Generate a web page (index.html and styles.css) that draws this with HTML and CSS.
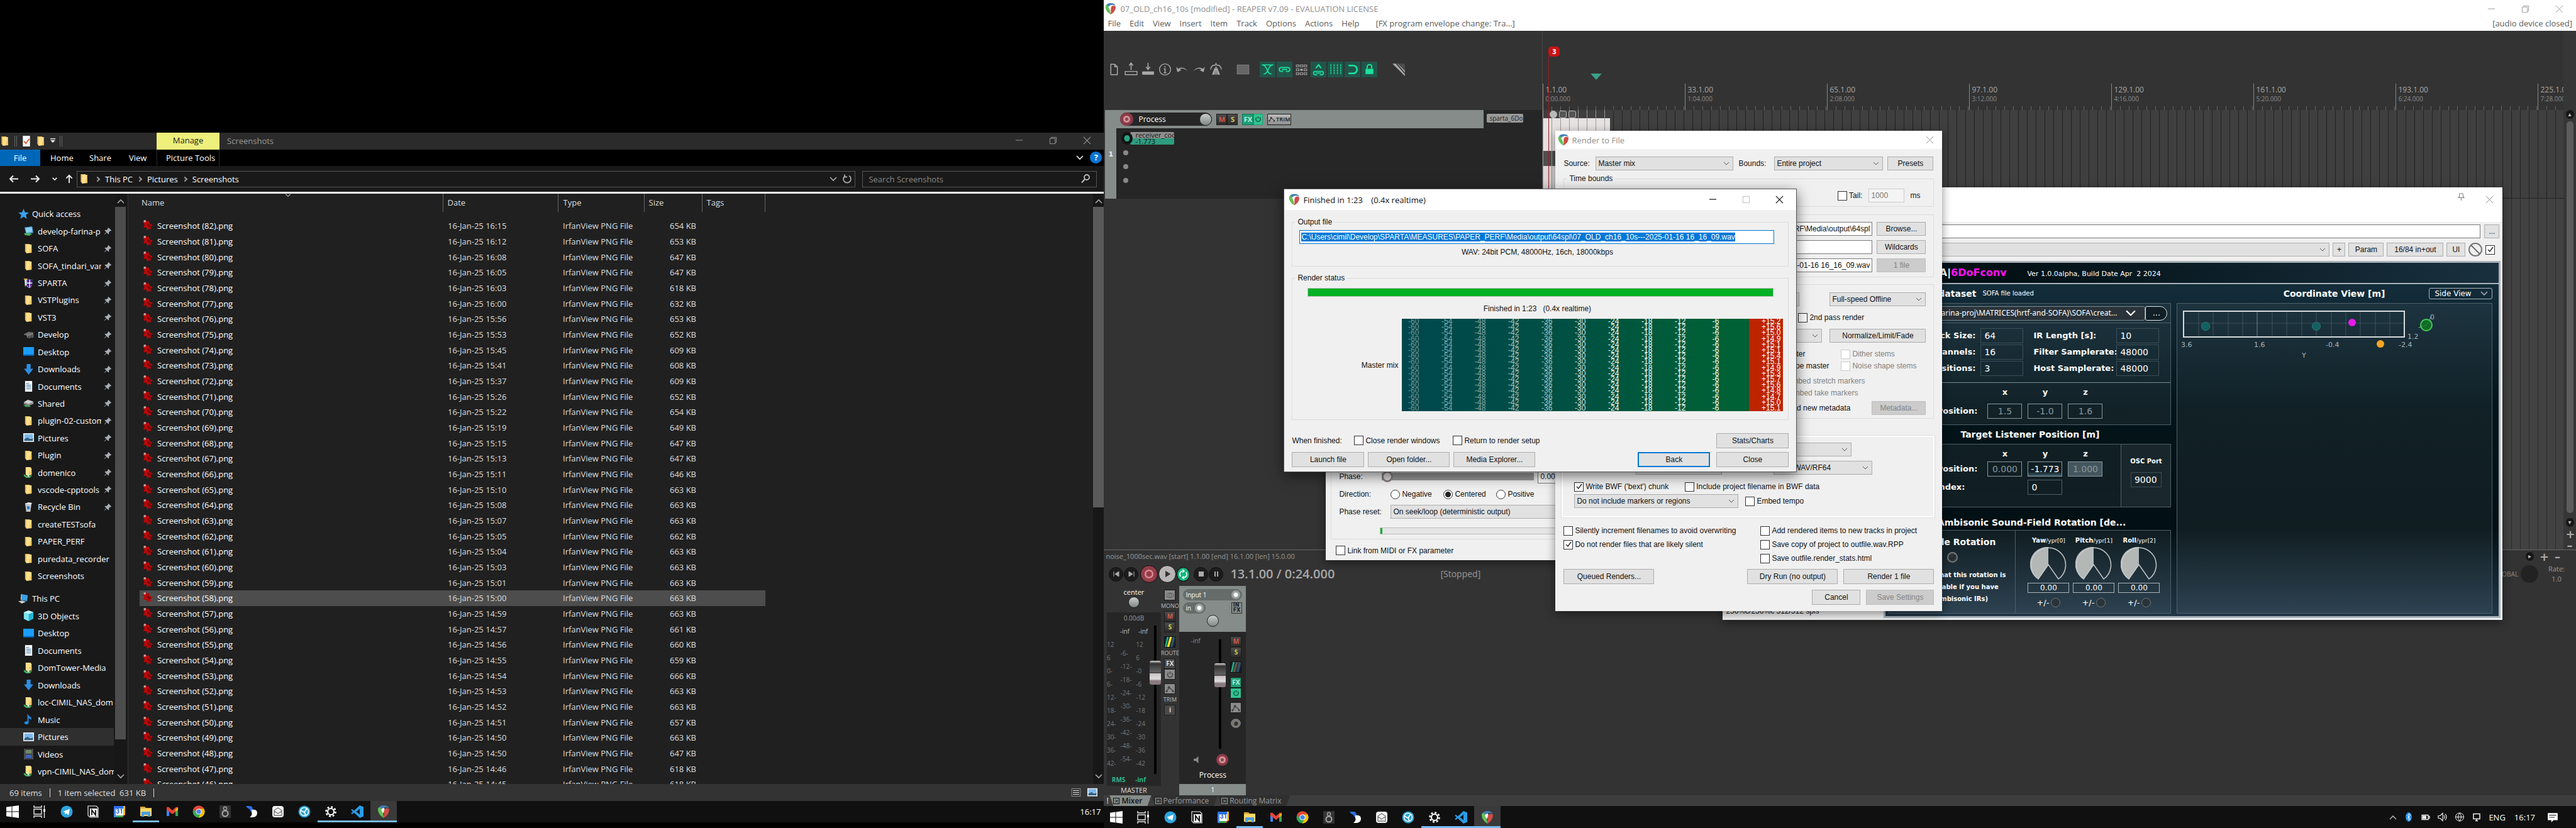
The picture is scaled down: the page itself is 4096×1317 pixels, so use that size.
FILE: index.html
```html
<!DOCTYPE html>
<html lang="en">
<head>
<meta charset="utf-8">
<title>Desktop</title>
<link rel="stylesheet" href="styles.css">
</head>
<body>
<svg class="sprite" aria-hidden="true">
  <symbol id="folder" viewBox="0 0 16 18"><path d="M2 1h8l1 3v12H4l-2-2z" fill="#e8b84d"/><path d="M4 2h9v14l-9 1z" fill="#ffdf8e"/><path d="M10 9h3v7h-3z" fill="#f3c860"/></symbol>
  <symbol id="netfolder" viewBox="0 0 16 18"><path d="M3 0h8l2 2v11l-7 1-3-1z" fill="#ffdf8e"/><path d="M9 7h4v6H9z" fill="#f3c860"/><path d="M0 12l5 3 9-1-4 4H4l-4-3z" fill="#46b35e"/><path d="M6 11h3v5H6z" fill="#cfe8d2"/></symbol>
  <symbol id="pin" viewBox="0 0 14 14"><path d="M8 1l5 5-1 1-1-.3-2.3 2.4.2 2.4-1 1L5 9.500 1.500 13l-.6-.6L4.400 9 1.500 6l1-1 2.400.3L7.300 3 7 2z" fill="#a9aeb4"/></symbol>
  <symbol id="star" viewBox="0 0 16 16"><path d="M8 0l2.200 5.300 5.600.4-4.300 3.700 1.400 5.600L8 12l-4.900 3 1.400-5.600L.2 5.700l5.600-.4z" fill="#3aa0ea"/></symbol>
  <symbol id="netdrive" viewBox="0 0 18 18"><path d="M2 3l13-2 2 11-12 2z" fill="#4aa8dc"/><path d="M4 4l10-1 1 7-10 2z" fill="#8fd0f2"/><path d="M1 13l6-1 8 2-5 3-7-1z" fill="#4cb05f"/></symbol>
  <symbol id="castle" viewBox="0 0 16 18"><path d="M1 1h4l2 2h7v8q-1 5-5 6-4-1-5-5L2 15z" fill="#ddd"/><path d="M5 3h9v8q-1 4-4.500 5.500Q5 15 5 11z" fill="#2a1fa8"/><path d="M9 3h1.500v13H9zM5 8h9v1.500H5z" fill="#fff"/><path d="M6 4l2 2-2 1zM12 5l1 2-2 0zM6 11l2 2-1 1zM12 11l0 2-2 0z" fill="#e02040"/><path d="M0 1h5v2H0z" fill="#cfa92a"/></symbol>
  <symbol id="devdisk" viewBox="0 0 18 14"><path d="M1 6l8-4 8 1v3L9 9 1 7z" fill="#6b6b6b"/><path d="M7 6v6M10 6v7M13 5v7M16 5v7" stroke="#8d8d8d" stroke-width="1.500"/></symbol>
  <symbol id="desktop" viewBox="0 0 16 14"><rect y="0" width="16" height="12" fill="#1a9dff"/><rect y="11" width="16" height="2" fill="#0668c2"/></symbol>
  <symbol id="down" viewBox="0 0 16 16"><path d="M5 0h6v7h4l-7 9-7-9h4z" fill="#2f8ee0"/></symbol>
  <symbol id="doc" viewBox="0 0 16 18"><path d="M2 0h12v18H2z" fill="#f4f8fb"/><path d="M4 4h5M4 7h8M4 10h8M4 13h8" stroke="#4a86b8" stroke-width="1.300"/></symbol>
  <symbol id="drive" viewBox="0 0 18 14"><path d="M1 5l7-4 9 3v4l-8 3-8-3z" fill="#cfcfcf"/><path d="M1 5l8 3 8-4v4l-8 3-8-3z" fill="#8c8c8c"/><path d="M0 10l9 0 4 3H4z" fill="#45a45b"/></symbol>
  <symbol id="picture" viewBox="0 0 16 14"><path d="M0 0h16v13H0z" fill="#f0f4f8"/><path d="M1.500 1.500h13v6h-13z" fill="#7fb9ea"/><path d="M1.500 11.500v-3l5-2 4 2 4-1v4z" fill="#2f6187"/></symbol>
  <symbol id="bin" viewBox="0 0 16 18"><path d="M2 3l11-1-2 15-7 0z" fill="#bcc3c8"/><path d="M2 3l6-2 6 1-3 3z" fill="#e8ecee"/><path d="M5 8l4 0 1 4-4 1z" fill="#1f74c4"/></symbol>
  <symbol id="pc" viewBox="0 0 18 16"><path d="M5 0l11 2-1 10-10-2z" fill="#3d9fe6"/><path d="M5 0l1 0-1 10-1-1z" fill="#d8e2ea"/><path d="M0 12l7-1 6 2-7 3z" fill="#c9ced2"/></symbol>
  <symbol id="cube" viewBox="0 0 16 18"><path d="M8 0l8 3v11l-8 4-8-4V3z" fill="#25b6cf"/><path d="M0 3l8 3v12l-8-4z" fill="#7fe3ee"/><path d="M8 0l8 3-8 3-8-3z" fill="#c3f4f8"/></symbol>
  <symbol id="music" viewBox="0 0 14 18"><path d="M6 0q1 4 5 5 1 2 0 5-1-3-4-3v7q0 3-3.500 3T0 14.500 4 12l1 0V0z" fill="#1d8ee8"/></symbol>
  <symbol id="video" viewBox="0 0 16 18"><path d="M0 0h16v18H0z" fill="#3a3d42"/><path d="M3 2h10v6H3z" fill="#728b63"/><path d="M3 10h10v6H3z" fill="#3d63b8"/><path d="M1.500 1v16M14.500 1v16" stroke="#aaa" stroke-dasharray="1 2"/></symbol>
  <symbol id="irfan" viewBox="0 0 20 20"><path d="M5 1l4 3 2-1 2 5 5 2-4 3 1 4-4-1-2 3-2-5-5 0 2-5-3-4 4 0z" fill="#b80808"/><path d="M9 7l4 3 2 1-3 3-3-3z" fill="#7d0303"/><circle cx="4.500" cy="3.500" r="2" fill="#c9a3a3"/></symbol>

  <symbol id="win" viewBox="0 0 20 20"><path d="M0 2.800L8.500 1.600v8H0zM9.500 1.500L20 0v9.600H9.500zM0 10.500h8.500v8L0 17.300zM9.500 10.500H20V20L9.500 18.500z" fill="#fff"/></symbol>
  <symbol id="taskview" viewBox="0 0 20 20"><path d="M1 0v3h12V0M1 20v-3h12v3M1 6h12v8H1zM17.500 0v20" fill="none" stroke="#e8e8e8" stroke-width="1.400"/><path d="M16 6h3v4h-3z" fill="#fff"/></symbol>
  <symbol id="telegram" viewBox="0 0 20 20"><circle cx="10" cy="10" r="9.500" fill="#2ca5e0"/><path d="M4 10l11-4.500-2 10-4-3-1.500 2-.5-3.500z" fill="#fff"/></symbol>
  <symbol id="notion" viewBox="0 0 20 20"><path d="M2 1h13l3 3v15H5l-3-3z" fill="#111" stroke="#eee" stroke-width="1.200"/><path d="M5 5h12v13H5z" fill="#f4f4f4"/><path d="M8 15.500v-8l6 8v-8" fill="none" stroke="#000" stroke-width="1.700"/></symbol>
  <symbol id="cal" viewBox="0 0 20 20"><path d="M1 1h15v4H1z" fill="#2a6fe8"/><path d="M16 1h3v14h-4V5h1z" fill="#f8bb15"/><path d="M1 5h4v14H1z" fill="#4a86f0"/><path d="M5 15h10v4H5z" fill="#34a853"/><path d="M15 15h4l-4 4z" fill="#ea4335"/><path d="M4 5h12v11H4z" fill="#fff"/></symbol>
  <symbol id="files" viewBox="0 0 20 20"><path d="M1 2h7l2 2h9v5H1z" fill="#e2a82f"/><path d="M1 5h18v12H1z" fill="#ffd968"/><path d="M3 10h14v8h-4v-3H7v3H3z" fill="#4d9fe0"/></symbol>
  <symbol id="gmail" viewBox="0 0 20 20"><path d="M1 3v14h4V9z" fill="#4285f4"/><path d="M19 3v14h-4V9z" fill="#34a853"/><path d="M1 3l3-.5L10 8l6-5.500 3 .5v4l-9 7-9-7z" fill="#ea4335"/><path d="M15 6l4-3v4l-4 3z" fill="#fbbc04"/></symbol>
  <symbol id="chrome" viewBox="0 0 20 20"><circle cx="10" cy="10" r="9.500" fill="#34a853"/><path d="M10 .5a9.500 9.500 0 0 1 8.300 5H10L5.500 12 1.700 5.400A9.500 9.500 0 0 1 10 .5z" fill="#ea4335"/><path d="M18.300 5.500A9.500 9.500 0 0 1 9.500 19.500L14.500 11 10 5.500z" fill="#fbbc04"/><circle cx="10" cy="10" r="4.600" fill="#fff"/><circle cx="10" cy="10" r="3.600" fill="#4285f4"/></symbol>
  <symbol id="eight" viewBox="0 0 20 20"><path d="M1 0h18v20H1z" fill="#333"/><circle cx="10" cy="5" r="2.600" fill="none" stroke="#999" stroke-width="1.600"/><circle cx="10" cy="13" r="4.500" fill="none" stroke="#aaa" stroke-width="2"/></symbol>
  <symbol id="blob" viewBox="0 0 20 20"><path d="M1 1h7q4 1 4 6l-2 3q-3-1-3-4Q3 5 1 1z" fill="#2b6fe3"/><path d="M10 7q9-1 9 5t-7 7H7q5-4 3-8z" fill="#fff"/></symbol>
  <symbol id="mailhome" viewBox="0 0 20 20"><rect x="1" y="1" width="18" height="18" rx="4" fill="#f2f2f2"/><path d="M4 8l6-4 6 4v8H4zM4 9l6 4 6-4" fill="none" stroke="#777" stroke-width="1.300"/></symbol>
  <symbol id="orb" viewBox="0 0 20 20"><circle cx="10" cy="10" r="9.500" fill="#2aa0cf"/><circle cx="10" cy="10" r="6.500" fill="none" stroke="#eaf8ff" stroke-width="1.600"/><path d="M4 8l6 3 4-6M10 11l2 5" stroke="#fff" stroke-width="1.800" fill="none"/></symbol>
  <symbol id="gear" viewBox="0 0 20 20"><circle cx="10" cy="10" r="5" fill="none" stroke="#fff" stroke-width="2.200"/><circle cx="10" cy="10" r="7.500" fill="none" stroke="#fff" stroke-width="2.600" stroke-dasharray="2.900 2.990"/></symbol>
  <symbol id="vscode" viewBox="0 0 20 20"><path d="M14 0l6 2.500v15L14 20 5 11.500 2 14 0 13l3-3-3-3 2-1 3 2.500zM14 5.500L8.500 10l5.500 4.500z" fill="#2a9ce8"/></symbol>
  <symbol id="reaper" viewBox="0 0 20 20"><path d="M10 0q8 0 9 6-1-3-6-3T5 9L1 6q2-6 9-6z" fill="#3f7fb8"/><path d="M1 5q-1 9 9 15-4-6-4-11z" fill="#4bb84a"/><path d="M3 3q6 3 7 17Q2 13 1 5z" fill="#68c055"/><path d="M19 6q0 9-9 14 1-6 0-12 3-5 7-3z" fill="#cf4c45"/><path d="M6 7q1-3 5-3 1 3-2 9z" fill="#f4f4f4"/></symbol>
  <symbol id="envelope" viewBox="0 0 16 12"><path d="M2 10l4-6 4 2 4 4" fill="none" stroke="currentColor" stroke-width="1.500"/><circle cx="6" cy="3" r="2" fill="currentColor"/><circle cx="2" cy="10" r="1.700" fill="currentColor"/><circle cx="13" cy="10" r="1.700" fill="currentColor"/></symbol>
  <symbol id="power" viewBox="0 0 12 12"><path d="M3.500 3a4 4 0 1 0 5 0M6 1v4" fill="none" stroke="currentColor" stroke-width="1.500"/></symbol>
  <symbol id="route" viewBox="0 0 18 18"><path d="M0 0h18v18H0z" fill="#123"/><path d="M4 0h3L3 18H0z" fill="#27b083"/><path d="M9 0h4L8 18H4z" fill="currentColor"/><path d="M14 0h4v4l-4 14h-4z" fill="#33505e"/></symbol>
  <symbol id="chev" viewBox="0 0 12 8"><path d="M1 1l5 5 5-5" fill="none" stroke="currentColor" stroke-width="1.600"/></symbol>
</svg>

<main class="desktop">
  <section class="monitor monitor-left">
    <div class="explorer">
      <header class="ex-title">
        <div class="qat">
          <svg class="i16"><use href="#folder"/></svg><i class="vbar"></i>
          <svg class="i16" viewBox="0 0 16 18"><path d="M2 0h12v18H2z" fill="#f4f8fb"/><path d="M4 9l3 4 6-8" stroke="#d8602e" stroke-width="2" fill="none"/></svg>
          <svg class="i16"><use href="#folder"/></svg>
          <svg class="i8" viewBox="0 0 8 8"><path d="M0 0h8v1.500H0zM0 3h8L4 7z" fill="#eee"/></svg><i class="vbar"></i>
        </div>
        <span class="manage">Manage</span>
        <span class="ex-name">Screenshots</span>
        <div class="caption">
          <button aria-label="Minimize"><svg viewBox="0 0 14 14"><path d="M1 6.500h12" stroke="currentColor"/></svg></button>
          <button aria-label="Restore"><svg viewBox="0 0 14 14"><path d="M1.500 3.500h9v9h-9zM3.500 3V1.500h9v9H11" fill="none" stroke="currentColor"/></svg></button>
          <button aria-label="Close"><svg viewBox="0 0 14 14"><path d="M1 1l12 12M13 1L1 13" stroke="currentColor" stroke-width="1.200"/></svg></button>
        </div>
      </header>
      <nav class="ex-tabs">
        <a href="#" class="file">File</a><a href="#">Home</a><a href="#">Share</a><a href="#">View</a><a href="#" class="tools">Picture Tools</a>
        <span class="ex-help"><svg class="chev12"><use href="#chev"/></svg><b>?</b></span>
      </nav>
      <div class="ex-address">
        <div class="arrows">
          <svg viewBox="0 0 16 14"><path d="M15 7H2M7 2L2 7l5 5" fill="none" stroke="#eee" stroke-width="2"/></svg>
          <svg viewBox="0 0 16 14"><path d="M1 7h13M9 2l5 5-5 5" fill="none" stroke="#eee" stroke-width="2"/></svg>
          <svg class="small" viewBox="0 0 12 8"><path d="M2 2l4 4 4-4" fill="none" stroke="#eee" stroke-width="2"/></svg>
          <svg viewBox="0 0 14 16"><path d="M7 15V2M2 7l5-5 5 5" fill="none" stroke="#eee" stroke-width="2"/></svg>
        </div>
        <div class="crumbs">
          <svg class="i16"><use href="#folder"/></svg><i class="gt"></i><a href="#">This PC</a><i class="gt"></i><a href="#">Pictures</a><i class="gt"></i><a href="#">Screenshots</a>
          <span class="crumb-end"><svg class="chev12"><use href="#chev"/></svg><svg class="i16" viewBox="0 0 16 16"><path d="M5 3a6 6 0 1 0 6 0M4 1v4h4" fill="none" stroke="#aaa" stroke-width="1.800"/></svg></span>
        </div>
        <label class="search"><input type="text" placeholder="Search Screenshots" aria-label="Search"><svg class="i16" viewBox="0 0 16 16"><circle cx="10" cy="5.500" r="4" fill="none" stroke="#bbb" stroke-width="1.800"/><path d="M7 8.500L2 14" stroke="#bbb" stroke-width="2"/></svg></label>
      </div>
      <div class="ex-main">
        <nav class="tree"><ul id="tree-quick"></ul><ul id="tree-pc"></ul></nav>
        <div class="scroll scroll-tree"><svg class="chev12 up"><use href="#chev"/></svg><i></i><svg class="chev12"><use href="#chev"/></svg></div>
        <div class="files">
          <svg class="chev12 sortmark"><use href="#chev"/></svg>
          <table>
            <thead><tr><th>Name</th><th>Date</th><th>Type</th><th>Size</th><th>Tags</th></tr></thead>
            <tbody id="file-rows"></tbody>
          </table>
        </div>
        <div class="scroll scroll-files"><svg class="chev12 up"><use href="#chev"/></svg><i></i><svg class="chev12"><use href="#chev"/></svg></div>
      </div>
      <footer class="ex-status"><span>69 items</span><i></i><span>1 item selected&nbsp; 631 KB</span><i></i>
        <span class="views"><svg class="i16" viewBox="0 0 16 14"><path d="M1 1h14v12H1z" fill="none" stroke="#888"/><path d="M3 4h10M3 7h10M3 10h10" stroke="#ddd"/></svg><svg class="i16" viewBox="0 0 16 14"><use href="#picture"/></svg></span></footer>
    </div>
    <div class="taskbar" data-taskbar><time>16:17</time></div>
  </section>

  <section class="monitor monitor-right">
    <div class="reaper">
      <header class="rp-title"><svg class="i18"><use href="#reaper"/></svg><span>07_OLD_ch16_10s [modified] - REAPER v7.09 - EVALUATION LICENSE</span>
        <div class="caption">
          <button aria-label="Minimize"><svg viewBox="0 0 14 14"><path d="M1 6.500h12" stroke="currentColor"/></svg></button>
          <button aria-label="Restore"><svg viewBox="0 0 14 14"><path d="M1.500 3.500h9v9h-9zM3.500 3V1.500h9v9H11" fill="none" stroke="currentColor"/></svg></button>
          <button aria-label="Close"><svg viewBox="0 0 14 14"><path d="M1 1l12 12M13 1L1 13" stroke="currentColor"/></svg></button>
        </div></header>
      <nav class="rp-menu"><a href="#">File</a><a href="#">Edit</a><a href="#">View</a><a href="#">Insert</a><a href="#">Item</a><a href="#">Track</a><a href="#">Options</a><a href="#">Actions</a><a href="#">Help</a><span class="undo-text">[FX program envelope change: Tra...]</span><span class="audio-state">[audio device closed]</span></nav>
      <div class="rp-body">
        <div class="tracks">
          <div class="toolbar">
            <svg viewBox="0 0 24 24"><path d="M7 4h6l4 4v12H7zM13 4v4h4" fill="none" stroke="#aaa" stroke-width="1.400"/></svg>
            <svg viewBox="0 0 24 24"><path d="M3 15h18v5H3z" fill="none" stroke="#aaa" stroke-width="1.400"/><path d="M12 13V3M9 6l3-4 3 4" fill="none" stroke="#aaa" stroke-width="1.500"/></svg>
            <svg viewBox="0 0 24 24"><path d="M3 15h18v5H3z" fill="#aaa"/><path d="M12 2v9M9 8l3 4 3-4" fill="none" stroke="#aaa" stroke-width="1.500"/></svg>
            <svg viewBox="0 0 24 24"><circle cx="12" cy="12" r="8.500" fill="none" stroke="#aaa" stroke-width="1.300"/><path d="M12 7v2M10 11h2v6M10 17h4" stroke="#aaa" stroke-width="1.600" fill="none"/></svg>
            <svg viewBox="0 0 24 24"><path d="M3 8l2 8 6-3-3-1q5-4 13 3-7-9-15-4z" fill="#aaa"/></svg>
            <svg viewBox="0 0 24 24"><path d="M21 8l-2 8-6-3 3-1q-5-4-13 3 7-9 15-4z" fill="#aaa"/></svg>
            <svg viewBox="0 0 24 24"><path d="M10 9L6 20h4l1-9zM14 9l4 11h-4l-1-9zM11 8h2v12h-2z" fill="#aaa"/><path d="M4 12q0-7 8-7t8 7M12 2v3" fill="none" stroke="#aaa" stroke-width="1.500"/></svg>
            <i></i>
            <svg viewBox="0 0 24 24"><path d="M3 5h18v14H3z" fill="#666" stroke="#aaa" stroke-dasharray="1 1"/></svg>
            <i></i>
            <button class="on" aria-label="Crossfade"><svg viewBox="0 0 24 24"><path d="M3 5h18M4 5c8 0 6 14 14 14M20 5c-8 0-6 14-14 14" fill="none" stroke="#1ee29c" stroke-width="1.500"/></svg></button>
            <button class="on" aria-label="Item grouping"><svg viewBox="0 0 24 24"><path d="M10 15H7a3 3 0 0 1 0-6h10a3 3 0 0 1 0 6h-3M8 12h8" fill="none" stroke="#1ee29c" stroke-width="1.700"/></svg></button>
            <button aria-label="Ripple"><svg viewBox="0 0 24 24"><path d="M4 5h4v3H4zM10 5h4v3h-4zM16 5h4v3h-4zM4 11h4v3H4zM16 11h4v3h-4zM4 17h4v3H4zM10 17h4v3h-4zM16 17h4v3h-4z" fill="none" stroke="#aaa"/><path d="M10 11h4v3h-4z" fill="#aaa"/></svg></button>
            <button class="on" aria-label="Envelopes"><svg viewBox="0 0 24 24"><path d="M8 10l4-5 4 5" fill="none" stroke="#1ee29c" stroke-width="2"/><path d="M10 20H7a2.500 2.500 0 0 1 0-5h10a2.500 2.500 0 0 1 0 5h-3M8 17.500h8" fill="none" stroke="#1ee29c" stroke-width="1.600"/></svg></button>
            <button class="on" aria-label="Grid"><svg viewBox="0 0 24 24"><path d="M5 4v16M10 4v16M15 4v16M20 4v16" stroke="#1ee29c" stroke-width="1.400" stroke-dasharray="3 1"/></svg></button>
            <button class="on" aria-label="Snap"><svg viewBox="0 0 24 24"><path d="M6 6h7a5.500 5.500 0 0 1 0 12H6" fill="none" stroke="#1ee29c" stroke-width="2.600"/></svg></button>
            <button class="on" aria-label="Lock"><svg viewBox="0 0 24 24"><path d="M6 11h12v8H6z" fill="#1ee29c"/><path d="M8.500 11V8a3.500 3.500 0 0 1 7 0v3" fill="none" stroke="#1ee29c" stroke-width="1.800"/></svg></button>
            <svg class="ramp" viewBox="0 0 24 24"><path d="M2 3h8l11 11v8z" fill="#aaa"/><path d="M8 3l13 15M13 3l8 9" stroke="#333" stroke-width="1.500"/><path d="M11 3l10 11V3z" fill="#777" fill-opacity=".35"/></svg>
          </div>
          <div class="tcp">
            <div class="tcp-num">1</div>
            <div class="tcp-main">
              <div class="tcp-bar">
                <span class="tcp-name"><b class="rec"></b>Process<b class="knob"></b></span>
                <span class="pair"><button class="mute">M</button><button class="solo">S</button></span>
                <span class="pair"><button class="fx">FX</button><button class="fxon" aria-label="FX on"><svg class="i10"><use href="#power"/></svg></button></span>
                <button class="trim"><svg class="i10"><use href="#envelope"/></svg>TRIM</button>
              </div>
              <div class="tcp-param"><b class="pknob"></b><span>receiver_cool<br>-1.773</span></div>
              <div class="dots"><i></i><i></i><i></i></div>
            </div>
            <div class="tcp-fx"><span>sparta_6Do</span></div>
          </div>
        </div>
        <div class="arrange">
          <i class="cursor"></i>
          <div class="marks"><b class="marker">3</b><svg viewBox="0 0 16 10"><path d="M0 0h16L8 9z" fill="#3aa08a"/></svg></div>
          <div class="ruler" id="ruler"></div>
          <div class="lane"><div class="item"><b></b><b></b><b></b></div></div>
          <div class="void"></div>
        </div>
        <div class="vscroll"><b>▴</b><i></i><b>▾</b><b class="sign">+</b><b class="sign">–</b></div>
      </div>
      <div class="rp-info"><span>noise_1000sec.wav [start] 1.1.00 [end] 16.1.00 [len] 15.0.00</span><span class="hz"><b>▸</b><b class="sign">+</b><b class="sign">–</b></span></div>
      <div class="transport">
        <div class="tbtns">
          <button aria-label="Start"><svg viewBox="0 0 12 12"><path d="M2 2v8M10 2v8L4 6z" fill="#aaa" stroke="#aaa"/></svg></button>
          <button aria-label="End"><svg viewBox="0 0 12 12"><path d="M10 2v8M2 2v8l6-4z" fill="#aaa" stroke="#aaa"/></svg></button>
          <button class="t-rec" aria-label="Record"><svg viewBox="0 0 12 12"><circle cx="6" cy="6" r="3.500" fill="none" stroke="#d98c94" stroke-width="1.500"/></svg></button>
          <button class="t-play" aria-label="Play"><svg viewBox="0 0 12 12"><path d="M4 2.500v7L9.500 6z" fill="#333"/></svg></button>
          <button class="t-loop" aria-label="Repeat"><svg viewBox="0 0 12 12"><path d="M3 8.500A3.800 3.800 0 0 1 5 2.300M9 3.500a3.800 3.800 0 0 1-2 6.200M5 .8l2 1.500-2 1.500M7 8.200l-2 1.500 2 1.500" fill="none" stroke="#fff" stroke-width="1.200"/></svg></button>
          <i></i>
          <button aria-label="Stop"><svg viewBox="0 0 12 12"><path d="M2 2h8v8H2z" fill="#aaa"/></svg></button>
          <button aria-label="Pause"><svg viewBox="0 0 12 12"><path d="M3 2h2v8H3zM7 2h2v8H7z" fill="#aaa"/></svg></button>
        </div>
        <strong>13.1.00 / 0:24.000</strong><span class="stopped">[Stopped]</span>
        <span class="global">GLOBAL</span><span class="ratek"></span><span class="rate">Rate:<br>1.0</span>
      </div>
      <div class="mixer">
        <div class="master">
          <div class="m-left">
            <span class="center">center</span><b class="knob"></b>
            <div class="m-meter">
              <span class="db">0.00dB</span><div class="infs"><span>-inf</span><span>-inf</span></div>
              <div class="scale"><div id="sc-l"></div><div id="sc-m" class="mid"></div><div id="sc-r"></div><div class="fader"><b></b></div></div>
              <div class="rms"><span>RMS</span><span>-inf</span></div>
            </div>
            <span class="m-name">MASTER</span>
          </div>
          <div class="m-btns">
            <button class="gray" aria-label="Mono"><svg viewBox="0 0 18 14"><circle cx="7" cy="7" r="4.500" fill="none" stroke="#555"/><circle cx="11" cy="7" r="4.500" fill="none" stroke="#555"/></svg></button><small>MONO</small>
            <button class="mute">M</button><button class="solo">S</button>
            <svg class="route yellow"><use href="#route"/></svg><small>ROUTE</small>
            <button class="dim">FX</button><button class="gray" aria-label="FX power"><svg class="i10"><use href="#power"/></svg></button>
            <button class="gray top" aria-label="Trim"><svg class="i12"><use href="#envelope"/></svg></button><small>TRIM</small>
            <button class="dim">i</button>
          </div>
        </div>
        <div class="strip">
          <div class="strip-in">
            <div class="pill wide">Input 1<i></i></div>
            <div class="inrow"><div class="pill">in<i></i></div><span class="infx">IN<br>FX</span></div>
            <b class="knob"></b>
          </div>
          <div class="strip-main">
            <div class="s-grid">
              <span class="s-inf">-inf</span><div class="fader"><b></b></div>
              <div class="m-btns">
                <button class="mute">M</button><button class="solo">S</button>
                <svg class="route brown"><use href="#route"/></svg>
                <button class="fx">FX</button><button class="fxon" aria-label="FX power"><svg class="i10"><use href="#power"/></svg></button>
                <button class="gray top" aria-label="Trim"><svg class="i12"><use href="#envelope"/></svg></button>
                <button class="phase">ø</button>
              </div>
            </div>
            <div class="s-rec"><svg viewBox="0 0 12 14"><path d="M0 5h4l5-5v14L4 9H0z" fill="#888"/></svg><b class="rec"></b></div>
            <span class="s-name">Process</span>
          </div>
          <div class="strip-num">1</div>
        </div>
      </div>
      <nav class="docks"><span>!</span><a href="#" class="on"><i>×</i>Mixer</a><a href="#"><i>×</i>Performance</a><a href="#"><i>×</i>Routing Matrix</a></nav>
    </div>
    <div class="taskbar" data-taskbar><span class="tray">
      <svg class="chev12 up"><use href="#chev"/></svg>
      <svg class="i16" viewBox="0 0 16 16"><ellipse cx="8" cy="8" rx="5" ry="7.500" fill="#1c86e0"/><path d="M5 5l6 6-3 2.500v-11L11 5l-6 6" fill="none" stroke="#fff"/></svg>
      <svg class="i16" viewBox="0 0 16 16"><path d="M2 5h10v7H2zM12 7h2v3h-2" fill="none" stroke="#eee" stroke-width="1.300"/><path d="M3 6h6v5H3z" fill="#eee"/></svg>
      <svg class="i16" viewBox="0 0 16 16"><path d="M1 6h3l4-4v12l-4-4H1zM10 5q2 3 0 6M12 3q4 5 0 10" fill="none" stroke="#eee" stroke-width="1.200"/></svg>
      <svg class="i16" viewBox="0 0 16 16"><circle cx="8" cy="8" r="6.500" fill="none" stroke="#eee"/><path d="M1.500 8h13M8 1.500q-5 6.500 0 13M8 1.500q5 6.500 0 13" fill="none" stroke="#eee"/></svg>
      <svg class="i16" viewBox="0 0 16 16"><path d="M3 3h10v8H3zM6 14h4M8 11v3" fill="none" stroke="#eee" stroke-width="1.500"/></svg>
      <span>ENG</span></span><time>16:17</time><svg class="notif" viewBox="0 0 16 16"><path d="M1 2h14v10H9l-3 3v-3H1z" fill="#fff"/><path d="M3 5h10M3 8h8" stroke="#333"/></svg></div>

    <form class="win modwin">
      <fieldset>
        <div class="row phase-row"><label for="ph">Phase:</label><input id="ph" type="range" value="0"><input class="num" type="text" value="0.00" aria-label="Phase value"></div>
        <div class="row"><span class="lab">Direction:</span><label class="opt neg"><input type="radio" name="dir">Negative</label><label class="opt cen"><input type="radio" name="dir" checked>Centered</label><label class="opt"><input type="radio" name="dir">Positive</label></div>
        <div class="row reset-row"><label class="lab" for="pr">Phase reset:</label><select id="pr"><option>On seek/loop (deterministic output)</option></select></div>
        <div class="mini-bar"></div>
      </fieldset>
      <label class="opt link"><input type="checkbox">Link from MIDI or FX parameter</label>
    </form>

    <div class="win fxwin">
      <div class="fx-title"><svg class="fxpin" viewBox="0 0 14 14"><path d="M4 1h6v6h2v1H2V7h2zM7 8v5" fill="none" stroke="#777"/></svg><button aria-label="Close"><svg viewBox="0 0 14 14"><path d="M1 1l12 12M13 1L1 13" stroke="#888"/></svg></button></div>
      <div class="fx-edit"><input type="text" aria-label="Comment"><button>...</button></div>
      <div class="fx-bar"><select aria-label="Preset"><option></option></select><button>+</button><button class="wide">Param</button><button class="io">16/84 in+out</button><button class="ui">UI</button><span class="wet"></span><input type="checkbox" checked aria-label="Enabled"></div>
      <div class="fx-body">
        <div class="fx-left"><span>256%c/256%c 512/512 spls</span></div>
        <div class="plug">
          <header><b>SPARTA|<em>6DoFconv</em></b><span>Ver 1.0.0alpha, Build Date Apr&nbsp; 2 2024</span></header>
          <div class="plug-cols">
            <div class="pl-left">
              <div class="pl-head load"><b>Load dataset</b><span>SOFA file loaded</span></div>
              <div class="panel">
                <div class="filerow"><div class="combo"><span>farina-proj\MATRICES(hrtf-and-SOFA)\SOFA\creat...</span><svg class="chev16"><use href="#chev"/></svg></div><button>...</button></div>
                <div class="info">
                  <b>Block Size:</b><span>64</span><b class="l">IR Length [s]:</b><span>10</span>
                  <b>Channels:</b><span>16</span><b class="l">Filter Samplerate:</b><span>48000</span>
                  <b>Positions:</b><span>3</span><b class="l">Host Samplerate:</b><span>48000</span>
                </div>
                <div class="xyz src"><b></b><b>x</b><b>y</b><b>z</b><b class="r">Position:</b><span>1.5</span><span>-1.0</span><span>1.6</span></div>
              </div>
              <div class="pl-head target"><b>Target Listener Position [m]</b></div>
              <div class="panel targets">
                <div class="xyz"><b></b><b>x</b><b>y</b><b>z</b><b class="r">Position:</b><span>0.000</span><span class="act">-1.773</span><span class="off">1.000</span><b class="r idxl">Index:</b><i></i><span class="idx">0</span></div>
                <div class="osc"><b>OSC Port</b><span>9000</span></div>
              </div>
              <div class="pl-head rot"><b>Ambisonic Sound-Field Rotation [de...</b></div>
              <div class="panel rotate">
                <div class="enable"><b>Enable Rotation</b><label><input type="checkbox" checked aria-label="Enable rotation"></label><p>Note that this rotation is<br>available if you have<br>Ambisonic IRs)</p></div>
                <div class="dials" id="dials"></div>
              </div>
            </div>
            <div class="pl-right">
              <div class="pl-head view"><b>Coordinate View [m]</b><div class="combo sm">Side View<svg class="chev12"><use href="#chev"/></svg></div></div>
              <div class="panel graph">
                <svg viewBox="0 0 500 100" width="500" height="100">
                  <g stroke="#ffffff" stroke-opacity=".16"><path d="M34 12v40M57 12v40M81 12v40M104 12v40M151 12v40M174 12v40M198 12v40M221 12v40M245 12v40M268 12v40M291 12v40M315 12v40M338 12v40M12 31h348"/><path d="M127 12v40" stroke-opacity=".4"/></g>
                  <rect x="10" y="12" width="351" height="41" fill="none" stroke="#d5dadd" stroke-width="2"/>
                  <circle cx="45" cy="36" r="6.500" fill="#136060" stroke="#2a7d7d"/><circle cx="221" cy="36" r="6.500" fill="#136060" stroke="#2a7d7d"/>
                  <circle cx="278" cy="30" r="6" fill="#e61be6"/><circle cx="323" cy="64" r="6" fill="#f5a623"/>
                  <path d="M396 34l8-14M384 38l12-4" stroke="#a9b4ba"/>
                  <circle cx="396" cy="34" r="9" fill="#0f7a20" fill-opacity=".8" stroke="#48c95c" stroke-width="2"/>
                  <g class="axis"><text x="6" y="69">3.6</text><text x="122" y="69">1.6</text><text x="236" y="69">-0.4</text><text x="352" y="69">-2.4</text><text x="198" y="86">Y</text><text x="366" y="56">1.2</text><text x="402" y="25">0</text></g>
                </svg>
              </div>
            </div>
          </div>
        </div>
      </div>
    </div>

    <form class="win render">
      <header class="w-title"><svg class="i20"><use href="#reaper"/></svg><span>Render to File</span><button type="button" aria-label="Close"><svg viewBox="0 0 14 14"><path d="M1 1l12 12M13 1L1 13" stroke="currentColor"/></svg></button></header>
      <div class="w-body">
        <div class="row r1"><label for="src">Source:</label><select id="src"><option>Master mix</option></select><label for="bnd">Bounds:</label><select id="bnd"><option>Entire project</option></select><button type="button">Presets</button></div>
        <fieldset class="g1"><legend>Time bounds</legend><div class="row end"><label class="opt"><input type="checkbox">Tail:</label><input class="ms" type="text" value="1000" disabled aria-label="Tail length"><span>ms</span></div></fieldset>
        <fieldset class="g2"><legend>Output</legend>
          <div class="row"><input type="text" aria-label="Directory" value="SPARTA\MEASURES\PAPER_PERF\Media\output\64spl"><button type="button">Browse...</button></div>
          <div class="row"><input type="text" aria-label="File name"><button type="button">Wildcards</button></div>
          <div class="row"><input type="text" aria-label="Render to" value="07_OLD_ch16_10s---2025-01-16 16_16_09.wav"><button type="button" disabled>1 file</button></div>
        </fieldset>
        <fieldset class="g3"><legend>Options</legend>
          <div class="row sp"><select aria-label="Channels"><option></option></select><select class="speed" aria-label="Speed"><option>Full-speed Offline</option></select></div>
          <div class="row pass"><label class="opt"><input type="checkbox">2nd pass render</label></div>
          <div class="row sp norm"><select aria-label="Resample"><option></option></select><button type="button">Normalize/Limit/Fade</button></div>
          <div class="cols"><span class="c1">Dither master</span><label class="opt off"><input type="checkbox" disabled>Dither stems</label></div>
          <div class="cols t4"><span class="c2">Noise shape master</span><label class="opt off"><input type="checkbox" disabled>Noise shape stems</label></div>
          <div class="cols t8"><span class="c3 off">Embed stretch markers</span></div>
          <div class="cols t4"><span class="c4 off">Embed take markers</span></div>
          <div class="row sp meta"><span class="c5">Embed new metadata</span><button type="button" disabled>Metadata...</button></div>
        </fieldset>
        <div class="g4">
          <div class="row f1"><select aria-label="Format"><option></option></select></div>
          <div class="row f2"><select class="depth" aria-label="Bit depth"><option></option></select><select aria-label="Large files"><option>Auto WAV/RF64</option></select></div>
          <div class="row f3"><label class="opt"><input type="checkbox" checked>Write BWF ('bext') chunk</label><label class="opt"><input type="checkbox">Include project filename in BWF data</label></div>
          <div class="row f4"><select aria-label="Markers"><option>Do not include markers or regions</option></select><label class="opt"><input type="checkbox">Embed tempo</label></div>
        </div>
        <div class="checks">
          <label class="opt"><input type="checkbox">Silently increment filenames to avoid overwriting</label><label class="opt"><input type="checkbox">Add rendered items to new tracks in project</label>
          <label class="opt"><input type="checkbox" checked>Do not render files that are likely silent</label><label class="opt"><input type="checkbox">Save copy of project to outfile.wav.RPP</label>
          <i></i><label class="opt"><input type="checkbox">Save outfile.render_stats.html</label>
        </div>
        <div class="row b1"><button type="button">Queued Renders...</button><span></span><button type="button">Dry Run (no output)</button><button type="button">Render 1 file</button></div>
        <div class="row b2"><button type="button" class="cancel">Cancel</button><button type="button" disabled>Save Settings</button></div>
      </div>
    </form>

    <form class="win finished">
      <header class="w-title"><svg class="i20"><use href="#reaper"/></svg><span>Finished in 1:23&nbsp;&nbsp;&nbsp; (0.4x realtime)</span>
        <button type="button" aria-label="Minimize"><svg viewBox="0 0 14 14"><path d="M1 6.500h12" stroke="currentColor" stroke-width="1.300"/></svg></button><button type="button" class="faint" aria-label="Maximize"><svg viewBox="0 0 14 14"><path d="M1.500 1.500h11v11h-11z" fill="none" stroke="currentColor"/></svg></button><button type="button" aria-label="Close"><svg viewBox="0 0 14 14"><path d="M1 1l12 12M13 1L1 13" stroke="currentColor" stroke-width="1.300"/></svg></button></header>
      <div class="w-body">
        <fieldset class="o1"><legend>Output file</legend>
          <div class="path" role="textbox"><span>C:\Users\cimil\Develop\SPARTA\MEASURES\PAPER_PERF\Media\output\64spl\07_OLD_ch16_10s---2025-01-16 16_16_09.wav</span></div>
          <p>WAV: 24bit PCM, 48000Hz, 16ch, 18000kbps</p>
        </fieldset>
        <fieldset class="o2"><legend>Render status</legend>
          <div class="bar"></div>
          <p>Finished in 1:23&nbsp;&nbsp; (0.4x realtime)</p>
          <div class="mix"><span>Master mix</span><table class="meter"><tbody id="meter"></tbody></table></div>
        </fieldset>
        <div class="row when"><span>When finished:</span><label class="opt"><input type="checkbox">Close render windows</label><label class="opt"><input type="checkbox">Return to render setup</label><button type="button">Stats/Charts</button></div>
        <div class="row acts"><button type="button">Launch file</button><button type="button" class="mid">Open folder...</button><button type="button" class="mid">Media Explorer...</button><span></span><button type="button" class="default">Back</button><button type="button">Close</button></div>
      </div>
    </form>
  </section>
</main>
<script src="app.js"></script>
</body>
</html>
```
FILE: styles.css
```css
*{box-sizing:border-box}
html,body{margin:0;height:100%;background:#000}
body{font:13px/18px "Open Sans","Noto Sans",sans-serif;color:#fff;overflow:hidden}
a{color:inherit;text-decoration:none}
button,input,select{font:inherit;color:inherit;margin:0}
button{border:0;padding:0;background:none}
ul,p{margin:0;padding:0;list-style:none}
b,i,em{font-style:normal}
svg{display:block;flex:none}
.sprite{position:absolute;width:0;height:0}
.i8{width:8px;height:8px}.i10{width:11px;height:11px}.i12{width:14px;height:12px}
.i16{width:16px;height:17px}.i18{width:18px;height:20px}.i20{width:18px;height:19px}
.chev12{width:12px;height:8px;color:#aaa}.chev16{width:18px;height:11px}
.up{transform:rotate(180deg)}

.desktop{display:grid;grid-template-columns:3fr 4fr;height:100vh}
.monitor{position:relative;display:flex;flex-direction:column;min-width:0;overflow:hidden}
.monitor-left{padding:16vh 0 9px}
.caption{display:flex;margin-left:auto}
.caption button{width:54px;height:26px;display:grid;place-items:center;color:#999}
.caption svg{width:13px;height:13px}

/* explorer */
.explorer{flex:1;min-height:0;display:flex;flex-direction:column;background:#191919}
.ex-title{display:flex;height:27px;background:#2b2b2b;color:#999;line-height:26px}
.ex-title .qat{display:flex;align-items:center;gap:7px;width:249px}
.qat .vbar{width:4px;height:17px;border:solid #666;border-width:0 1px}
.manage{width:100px;background:#eef07c;color:#222;text-align:center;line-height:25px}
.ex-name{padding-left:12px}
.ex-tabs{display:flex;background:#000;height:26px;line-height:26px}
.ex-tabs a{width:62px;padding:0 16px}
.ex-tabs .file{width:64px;background:#0067b8;text-align:center;padding:0}
.ex-tabs a:nth-child(3){width:63px}
.ex-tabs a:nth-child(4){width:60px}
.ex-tabs .tools{width:100px;padding:0 14px;white-space:nowrap;border:solid #2a2a2a;border-width:0 1px}
.ex-help{margin-left:auto;display:flex;align-items:center;gap:9px;padding-right:3px}
.ex-help .chev12{color:#eee;width:14px}
.ex-help b{width:19px;height:19px;border-radius:50%;background:#0a74d4;text-align:center;line-height:19px}
.ex-address{display:flex;height:44px;padding:8px 11px 7px 0;border-bottom:3px solid #fff}
.arrows{display:flex;align-items:center;width:122px;padding-left:14px;gap:18px}
.arrows svg{width:16px;height:15px}
.arrows svg.small{width:10px;height:7px;margin-right:-8px}
.crumbs{flex:1;display:flex;align-items:center;border:1px solid #555;height:26px;padding-left:3px}
.gt{width:6px;height:6px;border:solid #999;border-width:2px 2px 0 0;transform:rotate(45deg);margin:0 9px 0 8px}
.crumbs .gt:nth-of-type(1){margin-left:10px}
.crumb-end{margin-left:auto;display:flex;gap:8px;padding-right:4px;align-items:center}
.search{display:flex;align-items:center;width:373px;height:26px;margin-left:11px;border:1px solid #555;padding:0 9px}
.search input{flex:1;background:none;border:0;outline:0;padding:0}
.search input::placeholder{color:#888}
.ex-main{flex:1;min-height:0;display:flex}
.tree{width:183px;padding-top:19px;overflow:hidden}
.tree ul{display:grid;grid-auto-rows:1fr}
#tree-quick{height:603px}
#tree-pc{height:302px;margin-top:9px}
.tree li{display:flex;align-items:center;padding-left:37px;gap:6px;white-space:nowrap;overflow:hidden;width:181px}
.tree li.root{padding-left:29px;gap:5px}
.tree li span{flex:1;overflow:hidden}
.tree li svg{width:17px;height:17px}
.tree li .pin{width:13px;height:13px;margin-right:3px;margin-left:-2px}
.tree li.on{background:#2f2f2f}
.scroll{display:flex;flex-direction:column;align-items:center;width:17px;padding:8px 0;background:#171717;gap:5px}
.scroll i{width:17px;background:#4d4d4d}
.scroll-tree i{height:847px}
.scroll-tree i+svg,.scroll-files i+svg{margin-top:auto}
.scroll-files i{height:478px;background:#5a5a5a}
.files{position:relative;flex:1;overflow:hidden;background:#202020;border-left:1px solid #333;margin-left:3px;padding-left:18px}
.sortmark{position:absolute;left:248px;top:0;height:6px}
.files table{border-collapse:collapse;table-layout:fixed;width:995px}
.files th{font-weight:400;text-align:left;height:29px;padding:0 7px;border-right:1px solid #666;color:#ddd}
.files th:first-child{width:482px;padding-left:3px}
.files th:nth-child(2){width:183px}.files th:nth-child(3){width:137px}.files th:nth-child(4){width:92px}
.files th:nth-child(3){padding-left:8px}
.files thead::after{content:"";display:table-row;height:10px}
.files td{padding:0 8px;white-space:nowrap;line-height:18px;color:#dedede}
.files tr{height:25px}
.files tbody tr:nth-child(3n){height:24px}
.files td:first-child{padding-left:4px;color:#fff}
.files td:first-child svg{float:left;width:19px;height:20px;margin-right:5px;margin-top:-2px}
.files td:nth-child(4){text-align:right;padding-right:9px}
.files tr.on{background:#4d4d4d}
.ex-status{height:27px;background:#333;display:flex;align-items:center;padding:0 10px 0 15px;gap:12px;color:#ddd}
.ex-status i{width:1px;height:14px;background:#ddd}
.views{margin-left:auto;display:flex;gap:10px}

.taskbar{position:relative;flex:none;display:flex;align-items:center;height:34px;background:#101010}
.monitor-right .taskbar{height:35px}
.taskbar button{position:relative;width:42px;height:100%;display:grid;place-items:center}
.taskbar button svg{width:20px;height:20px}
.taskbar button b{position:absolute;inset:0;font:700 10px/34px Roboto,sans-serif;color:#1a66d6;text-align:center}
.taskbar button:nth-child(1){width:40px}
.taskbar button:nth-child(2){width:45px}
.taskbar .run{box-shadow:inset 0 -3px #76b9ed}
.taskbar .active{background:#3a3a3a}
.taskbar time{margin-left:auto;padding-right:5px}
.tray{margin-left:auto;display:flex;align-items:center;gap:11px}
.tray+time{margin-left:14px;padding-right:19px}
.notif{width:18px;height:18px;margin-right:28px}

/* reaper */
.reaper{flex:1;min-height:0;display:flex;flex-direction:column;background:#333}
.rp-title{height:28px;background:#fff;color:#8f8f8f;display:flex;align-items:center;gap:6px;padding-left:2px}
.rp-title .caption{height:26px}
.rp-menu{height:21px;background:#fff;color:#5c5c5c;display:flex;line-height:19px;padding:0 6px;gap:14px}
.undo-text{margin-left:12px}
.audio-state{margin-left:auto}
.rp-body{flex:1;min-height:0;display:flex}
.tracks{width:698px;border-right:1px solid #444}
.toolbar{height:126px;display:flex;align-items:center;gap:2px;padding:0 0 3px 4px}
.toolbar>svg,.toolbar button{width:25px;height:25px}
.toolbar i{width:14px}
.toolbar i+svg+i{width:10px}
.toolbar button.on{background:#21554a}
.toolbar button svg{width:25px;height:25px}
.toolbar .ramp{margin-left:20px}
.tcp{display:flex;height:141px;margin-left:2px;background:#262626}
.tcp-num{width:18px;background:#858c89;color:#eee;display:grid;place-items:center;font:700 11px/14px "DejaVu Sans",sans-serif}
.tcp-main{width:584px}
.tcp-bar{height:29px;background:#858c89;display:flex;align-items:center;padding-left:6px;gap:7px}
.tcp-name{display:flex;align-items:center;gap:8px;width:146px;height:21px;border-radius:11px;background:#262626;font-size:12px}
.tcp-name .knob{margin-left:auto}
.rec{width:21px;height:21px;border-radius:50%;background:radial-gradient(#8b4650 0 2px,#d09098 3px 5px,#8b3a46 6px)}
.knob{width:20px;height:20px;border-radius:50%;background:linear-gradient(#c9cfcc,#7f8784);border:1px solid #222}
.pair{display:flex}
.mute,.solo,.fx,.fxon,.trim{width:17px;height:18px;font:700 11px/16px "Open Sans",sans-serif;background:linear-gradient(#4b4b4b,#2c2c2c);border:1px solid #1d1d1d;display:grid;place-items:center}
.mute{color:#d05a48}.solo{color:#d6d04a}
.fx{background:#1d9f75;color:#bdeedc;border-color:#127252}
.fxon{background:#30c592;color:#0d4f39;border-color:#1d9f75}
.tcp-bar .fx{width:18px}.tcp-bar .fxon{width:15px}
.trim{display:flex;align-items:center;justify-content:center;width:38px;background:linear-gradient(#bbb,#909090);color:#333;font-size:9px;gap:1px}
.tcp-param{display:flex;margin:6px 0 0 8px;font:11px/10px "Open Sans",sans-serif;color:#111}
.pknob{width:18px;height:20px;border-radius:50%;background:radial-gradient(#2aa581 0 4px,#141414 5px);margin-right:-4px;z-index:1}
.tcp-param span{width:70px;padding-left:8px;background:linear-gradient(#8f8f8f 50%,#2e9c7f 50%);overflow:hidden;white-space:nowrap;border-radius:2px}
.dots{display:grid;gap:14px;padding:9px 0 0 11px}
.dots i{width:8px;height:8px;border-radius:50%;background:#888}
.tcp-fx{padding:6px 0 0 5px}
.tcp-fx span{display:block;width:58px;height:14px;overflow:hidden;background:#9a9a9a;color:#222;border-radius:2px;font:10px/14px "Open Sans",sans-serif;padding-left:4px}
.arrange{position:relative;flex:1;min-width:0;display:flex;flex-direction:column;overflow:hidden}
.cursor{position:absolute;left:9px;top:40px;bottom:0;width:1px;background:#a11d22}
.marks{position:relative;height:84px}
.marker{position:absolute;left:9px;top:25px;width:18px;height:16px;border-radius:5px;background:#c81414;font:700 11px/16px "Open Sans",sans-serif;text-align:center}
.marks svg{position:absolute;left:76px;top:68px;width:18px;height:11px}
.ruler{display:flex;height:42px;color:#a8a8a8;font:12px/14px "Open Sans",sans-serif;background:repeating-linear-gradient(90deg,#666 0 1px,transparent 1px 14px) 0 100%/226px 6px repeat-x}
.ruler div{flex:0 0 226px;border-left:1px solid #888;padding:3px 0 0 3px}
.ruler small{display:block;font-size:10px;color:#8a8a8a}
.lane{height:141px;background:repeating-linear-gradient(90deg,#222 0 1px,transparent 1px 14px),#3f3f3f;border-bottom:1px solid #222}
.item{width:107px;height:100%;display:flex;gap:3px;padding:1px 0 0 11px;background:repeating-linear-gradient(90deg,#999 0 1px,transparent 1px 14px),linear-gradient(#3f3f3f 0 13px,#e6e2e2 13px 65px,#4f5151 65px 89px,#dcd8d8 89px)}
.item b{width:12px;height:12px;border-radius:3px;border:1px solid #bbb;background:#555}
.item b:first-child{border-radius:50%;background:#b9b9b9}
.void{flex:1;background:repeating-linear-gradient(90deg,#2b2b2b 0 1px,transparent 1px 14px),#424242}
.vscroll{width:20px;background:#363636;display:flex;flex-direction:column;align-items:center;gap:4px;padding-top:126px}
.vscroll i{width:11px;flex:1;border-radius:5px;background:#5c5c5c;margin-bottom:4px}
.vscroll b,.hz b{width:13px;height:14px;border-radius:50%;background:#161616;color:#bbb;font:10px/14px "DejaVu Sans",sans-serif;text-align:center}
.vscroll .sign,.hz .sign{background:none;font:700 18px/16px "DejaVu Sans",sans-serif;color:#aaa}
.rp-info{height:20px;border-top:1px solid #666;color:#999;font-size:11px;padding:0 3px;display:flex;align-items:center}
.hz{margin-left:auto;display:flex;gap:9px;padding-right:20px}
.transport{display:flex;height:38px;align-items:center;padding-left:8px}
.tbtns{display:flex;align-items:center;gap:1px;width:193px}
.tbtns button{width:23px;height:23px;border-radius:50%;background:#1c1c1c;border:1px solid #111;display:grid;place-items:center}
.tbtns svg{width:12px;height:12px}
.tbtns i{width:4px}
.tbtns .t-rec,.tbtns .t-play{width:28px;height:28px}
.tbtns .t-rec{background:#953d49;margin-left:2px}.tbtns .t-play{background:#b9b5b7}
.tbtns .t-loop{width:21px;background:#14b581}
.tbtns .t-rec svg{width:20px;height:20px}.tbtns .t-play svg{width:18px;height:18px}.tbtns .t-loop svg{width:17px;height:17px}
.transport strong{font:600 20px/24px "Open Sans",sans-serif;color:#a8a8a8;width:334px;white-space:nowrap}
.stopped{font-size:14px;color:#999}
.global{margin-left:auto;font-size:10px;color:#888}
.ratek{width:28px;height:28px;border-radius:50%;background:#222;margin:0 16px 0 4px}
.rate{font-size:11px;line-height:16px;color:#999;text-align:center;padding-right:18px}
.mixer{display:flex;height:333px;font-size:10px;line-height:12px}
.master{display:flex;width:120px}
.m-left{width:90px;display:flex;flex-direction:column;align-items:center;padding-left:5px;padding-top:4px}
.center{font-size:11px;line-height:12px}
.m-left>.knob{margin-top:1px;width:18px;height:18px}
.m-meter{width:86px;height:276px;margin-top:7px;background:#262626;color:#999;display:flex;flex-direction:column;align-items:center}
.db{padding-top:3px}
.infs{display:flex;gap:14px;padding-top:9px;color:#bbb}
.scale{display:flex;justify-content:space-between;width:86px;color:#777;padding-top:5px}
.scale div{line-height:21px}
.scale .mid{padding-top:14px}
.fader{position:relative;width:18px;height:238px;margin-top:-20px;background:linear-gradient(#000,#000) 50%/4px 100% no-repeat}
.scale .fader{height:236px;margin-bottom:-16px}
.fader b{display:block;position:absolute;top:56px;width:18px;height:38px;border-radius:3px;background:linear-gradient(#ddd,#333 12%,#666 48%,#111 50%,#c9c0c3 54%,#ddd 76%,#8a7a7e 84%,#8a7a7e)}
.rms{display:flex;gap:16px;color:#30b58a;font-weight:700;width:64px;margin:auto 16px 4px 0;justify-content:center}
.m-name{font-size:11px;line-height:14px;color:#ddd}
.m-btns{display:flex;flex-direction:column;align-items:center;width:30px;padding-top:6px;font-size:9px}
.m-btns button{width:18px;height:17px;font:700 10px/15px "Open Sans",sans-serif;display:grid;place-items:center;border:1px solid #1d1d1d;flex:none}
.m-btns small{font-size:9px;line-height:17px;color:#bbb}
.gray{background:#8b8b8b;color:#444}.dim{background:#4a4a4a;color:#ddd}
.m-btns .gray svg{width:15px;height:12px}
.m-btns .top{margin-top:6px}
.m-btns .fxon{background:#30c592}
.route{width:18px;height:18px;margin-top:6px;border:1px solid #111}
.yellow{color:#ffe21f}.brown{color:#6b5744;margin-bottom:7px}
.strip{width:106px;display:flex;flex-direction:column}
.strip-in{height:73px;background:#858c89;padding:5px 6px;display:flex;flex-direction:column}
.pill{display:flex;justify-content:space-between;align-items:center;width:36px;height:18px;border-radius:9px;background:#656c69;padding:0 3px 0 4px}
.pill.wide{width:94px}
.pill i{width:14px;height:14px;border-radius:50%;background:radial-gradient(#fff 0 3px,#9aa09d 4px)}
.inrow{display:flex;justify-content:space-between;margin-top:3px}
.infx{font:700 8px/8px "DejaVu Sans",sans-serif;color:#222;border:1px solid #333;padding:0 2px}
.strip-in .knob{width:19px;height:19px;margin:2px auto 0}
.strip-main{height:242px;background:#262626;display:flex;flex-direction:column}
.s-grid{display:flex;height:190px;padding-left:18px;color:#888}
.s-inf{width:38px;padding-top:8px}
.s-grid .fader{margin-top:12px;height:174px}
.s-grid .fader b{top:38px}
.s-grid .m-btns{width:32px;padding-top:7px}
.s-rec{display:flex;align-items:center;gap:26px;padding:4px 0 0 23px}
.s-rec svg{width:10px;height:13px}
.s-rec .rec{width:19px;height:19px}
.phase{border-radius:50%;background:#777;margin-top:8px;color:#222}
.s-name{margin:auto;font-size:12px}
.strip-num{height:18px;background:#858c89;text-align:center;line-height:18px}
.docks{display:flex;height:17px;background:#3d3d3d;font-size:12px;line-height:17px;color:#999;padding-left:4px}
.docks span{color:#fff;width:5px}
.docks a{display:flex;align-items:center;gap:3px;padding:0 14px 0 6px;background:#303030;clip-path:polygon(0 0,100% 0,calc(100% - 6px) 100%,6px 100%)}
.docks a.on{background:#858c89;color:#111;font-weight:600}
.docks a i{width:10px;height:10px;border:1px solid;font:9px/8px "DejaVu Sans",sans-serif;text-align:center}

/* dialogs */
.win{position:absolute;margin:0;background:#f0f0f0;color:#111;font:12px/14px "Liberation Sans",Arial,sans-serif;box-shadow:0 4px 14px rgba(0,0,0,.45)}
.win fieldset{margin:0;border:1px solid #dcdcdc;min-width:0;padding:0}
.win legend{padding:0 4px;margin-left:4px}
.row{display:flex;align-items:center}
.win button{background:#e1e1e1;border:1px solid #adadad;white-space:nowrap}
.win button:disabled{background:#ccc;border-color:#bfbfbf;color:#838383}
.win select{appearance:none;height:22px;background:#e1e1e1 url("data:image/svg+xml,%3Csvg xmlns='http://www.w3.org/2000/svg' width='10' height='7'%3E%3Cpath d='M1 1l4 4 4-4' fill='none' stroke='%23555'/%3E%3C/svg%3E") right 5px center no-repeat;border:1px solid #adadad;border-radius:0;padding:0 18px 0 3px}
.win input[type=text]{height:22px;border:1px solid #7a7a7a;background:#fff;padding:0 3px;min-width:0}
.win input[type=text]:disabled{border-color:#ccc;background:#f4f4f4;color:#777}
.opt{display:flex;align-items:center;gap:3px;white-space:nowrap}
.off{color:#838383}
.win input[type=checkbox],.win input[type=radio]{appearance:none;width:15px;height:15px;border:1px solid #333;background:#fff center no-repeat;flex:none}
.win input[type=checkbox]:checked{background-image:url("data:image/svg+xml,%3Csvg xmlns='http://www.w3.org/2000/svg' width='12' height='12'%3E%3Cpath d='M2 6l3 3 5-7' fill='none' stroke='%23222' stroke-width='1.300'/%3E%3C/svg%3E")}
.win input[type=checkbox]:disabled{border-color:#ccc}
.win input[type=radio]{border-radius:50%}
.win input[type=radio]:checked{background:radial-gradient(#222 0 4px,#fff 5px)}
.w-title{display:flex;align-items:center;background:#fff;font:13px/18px "Open Sans",sans-serif}
.win .w-title button{border:0;background:none;width:53px;height:28px;display:grid;place-items:center}
.w-title button svg{width:13px;height:13px}
.w-title span{margin:0 auto 0 5px}
.faint{color:#bbb}

.modwin{left:353px;top:640px;width:600px;height:251px}
.modwin fieldset{margin:0 8px;border-top:0;padding:104px 12px 8px;height:218px}
.modwin .row{height:28px}
.modwin .lab{width:82px}
.phase-row label{width:62px}
.phase-row input[type=range]{appearance:none;width:242px;height:12px;margin:0 6px;background:#999}
.phase-row input[type=range]::-webkit-slider-thumb{appearance:none;width:18px;height:18px;border-radius:50%;background:#ddd;border:3px solid #8a7f84}
.phase-row .num{width:110px}
.neg{width:84px}.cen{width:84px}
.reset-row select{width:330px}
.mini-bar{height:11px;margin:11px 0 0 65px;border:1px solid #bcbcbc;background:linear-gradient(90deg,#06b025 3px,#e6e6e6 3px)}
.link{margin:10px 0 0 16px}

.fxwin{left:984px;top:298px;width:1240px;height:688px;display:flex;flex-direction:column}
.fx-title{height:55px;background:#fff;display:flex;justify-content:flex-end;padding:9px 14px;gap:32px}
.fx-title svg{width:13px;height:13px}
.fx-title button{border:0;background:none;height:20px}
.fx-edit{display:flex;gap:6px;padding:4px 5px 0 0}
.fx-edit input{flex:1}.fx-edit button{width:24px}
.fx-bar{display:flex;align-items:center;gap:5px;padding:7px 8px 7px 0}
.fx-bar select{width:965px}
.fx-bar button{height:22px;width:20px}
.fx-bar .wide{width:56px}.fx-bar .io{width:90px}.fx-bar .ui{width:30px}
.wet{width:22px;height:22px;border-radius:50%;border:2px solid #777;background:linear-gradient(45deg,transparent 46%,#777 46% 54%,transparent 54%)}
.fx-body{flex:1;display:flex;min-height:0;padding:0 3px 3px 0}
.fx-left{width:256px;display:flex;align-items:flex-end;padding:0 0 4px 5px}
.plug{flex:1;border:3px solid #a9b4ba;font:13px/14px "DejaVu Sans",sans-serif;color:#fff;background:linear-gradient(#163140,#03141a 42%,#021014 75%,#213748)}
.plug header{height:34px;border-bottom:2px solid #a9b4ba;background:linear-gradient(90deg,#031116 20%,#19303f);display:flex;align-items:center}
.plug header b{font-size:16px;width:225px;padding-left:30px}
.plug header em{color:#ff10f0}
.plug header span{font-size:11px;padding-top:4px;white-space:nowrap}
.plug-cols{display:flex;gap:9px;padding:0 10px 0 5px}
.pl-left{width:449px}
.pl-right{flex:1;display:flex;flex-direction:column}
.pl-head{display:flex;align-items:center;height:30px}
.pl-head>b{font-size:14px;white-space:nowrap}
.load{padding-left:36px;gap:10px}
.load span{font-size:10px}
.panel{border:1px solid #4d6068;background:linear-gradient(rgba(255,255,255,.05),rgba(255,255,255,.06))}
.filerow{display:flex;height:31px;align-items:center;padding:0 5px;border-bottom:1px solid #4d6068}
.filerow .combo{flex:1;height:23px;border:1px solid #7b8a91;border-radius:3px;background:#2a3339;display:flex;justify-content:flex-end;align-items:center;gap:13px;padding-right:13px;overflow:hidden}
.combo span{white-space:nowrap;font:12px/16px "Noto Sans",sans-serif}
.win .filerow button{width:35px;height:23px;border:1px solid #dfe5e8;border-radius:3px 12px 12px 3px;background:#111f26;color:#fff}
.info{display:grid;grid-template-columns:137px 68px 132px 68px;gap:2px 8px;align-items:center;padding:8px 8px 10px 0;border-bottom:1px solid #7b8a91}
.info b{text-align:right;white-space:nowrap}
.info b.l{text-align:left;padding-left:8px}
.info span,.xyz span,.osc span{height:24px;border:1px solid #3c4f57;font-size:14px;line-height:23px;padding-left:5px}
.xyz{display:grid;grid-template-columns:140px 55px 55px 55px;column-gap:9px;row-gap:4px;text-align:center;align-items:center;align-content:start;padding:8px 0 9px}
.xyz.src{row-gap:11px}
.xyz .r{text-align:right}
.xyz .idxl{padding-right:20px}
.xyz>:not(:nth-child(4n+1)){margin-left:7px;margin-right:-7px}
.xyz span{padding:0;border-color:#8a979d;color:#8a979d}
.xyz .act{color:#fff;background:linear-gradient(transparent 70%,#3e5d68)}
.xyz .off{background:#44565e}
.xyz .idx{color:#fff;border-color:#4d6068;text-align:left;padding-left:5px}
.target{justify-content:center}
.targets{display:flex;height:101px}
.targets .xyz{width:368px;row-gap:5px}
.osc{flex:1;border-left:1px solid #4d6068;display:flex;flex-direction:column;align-items:center;gap:10px;padding-top:20px;background:rgba(255,255,255,.04)}
.osc b{font-size:10px}
.osc span{width:49px}
.rot{justify-content:flex-end;padding-right:72px;height:36px;padding-top:12px}
.rotate{display:flex;height:133px}
.enable{width:201px;border-right:1px solid #4d6068;display:flex;flex-direction:column;align-items:flex-end;padding:11px 15px 0 0}
.enable b{padding-right:16px;font-size:14px;white-space:nowrap}
.enable label{margin:9px 76px 7px 0}
.win .enable input{width:17px;height:17px;border-radius:50%;background-color:#2b363b;border:2px solid #777;background-image:url("data:image/svg+xml,%3Csvg xmlns='http://www.w3.org/2000/svg' width='12' height='12'%3E%3Cpath d='M3 6l3 4 4-9' fill='none' stroke='%23fff' stroke-width='2'/%3E%3C/svg%3E")}
.enable p{font-weight:700;font-size:10px;line-height:19px;text-align:center;white-space:nowrap}
.dials{display:flex;gap:6px;padding:9px 0 0 19px}
.dials div{width:66px;text-align:center;font-size:9px;white-space:nowrap}
.dials div>b{font-size:10px}
.dials div>span{display:block;height:16px;border:1px solid #a9b4ba;font-size:12px;line-height:15px}
.dials svg{margin:2px auto 4px}
.dials p{display:flex;justify-content:center;align-items:center;gap:3px;font-size:13px;padding-top:8px}
.win .dials input{border-radius:50%;background:#28343a;border-color:#777}
.view{justify-content:flex-end;gap:70px}
.combo.sm{width:101px;height:18px;border:1px solid #a9b4ba;border-radius:3px;font-size:12px;display:flex;align-items:center;justify-content:space-between;padding:0 6px 0 8px}
.graph{flex:1}
.axis text{fill:#a9b4ba;font:11px "DejaVu Sans",sans-serif}

.render{left:718px;top:208px;width:615px;height:764px}
.render .w-title{height:29px;color:#8f8f8f;padding-left:4px}
.render .w-title span{margin-left:4px}
.render .w-title button{width:40px}
.render .w-body{padding:12px 13px 0}
.render .row button{height:22px}
.r1 label{width:51px}.r1 #src{width:219px;margin-right:8px}.r1 label+#bnd{width:173px}.r1 #bnd{margin-left:6px}.r1 button{width:73px;margin-left:7px}
.render fieldset{margin-top:6px}
.render .g1{padding:9px 21px 6px 0}
.end{justify-content:flex-end}
.g1 .ms{width:57px;height:21px;margin:0 9px 0 10px}
.g1 .row{height:22px}
.render .g2{padding:5px 12px 7px;display:grid;gap:7px;margin-top:5px}
.g2 input{flex:1;text-align:right}
.g2 button{width:78px;margin-left:7px}
.render .g3{padding:6px 12px 5px;margin-top:4px}
.sp{justify-content:space-between}
.g3 .row:first-of-type select:first-child{width:362px}
.g3 .speed,.g3 .norm button{width:153px}
.g3 .norm select{width:398px}
.pass{height:16px;margin:10px 0 10px 360px}
.cols{display:flex;height:16px;align-items:center;margin-top:10px;text-align:right}
.cols span{width:371px}
.cols .c1+.opt{margin-left:57px}
.cols .c2{width:409px}.cols .c2+.opt{margin-left:19px}
.cols .c3{width:466px}.cols .c4{width:455px}
.t4{margin-top:3px}.t8{margin-top:8px}
.meta{margin-top:5px}
.c5{width:443px;text-align:right}
.meta button{width:86px}
.g4{margin:27px -1px 0 -3px;border:2px solid #fff;outline:1px solid #dcdcdc;padding:9px 10px 16px 18px;height:130px}
.f1 select{width:441px}
.f2{margin-top:7px;justify-content:space-between;padding-right:87px}
.f2 .depth{margin-left:98px;width:137px}
.f2 select:last-child{width:157px}
.f3{margin-top:10px;gap:26px;height:18px}
.f4{margin-top:3px;gap:11px}
.f4 select{width:261px}
.checks{display:grid;grid-template-columns:313px 1fr;grid-auto-rows:22px;margin-top:10px}
.b1{margin-top:6px}.b1 span{flex:1}
.render .b1 button,.render .b2 button{height:24px}
.b1 button{width:144px}.b1 button:last-child{margin-left:9px}
.b2{justify-content:flex-end;margin-top:9px;gap:9px}
.b2 .cancel{width:77px}.b2 button{width:108px}

.finished{left:286px;top:300px;width:816px;height:451px;border:1px solid #555;box-shadow:0 6px 20px rgba(0,0,0,.55)}
.finished .w-title{height:33px;padding-left:7px}
.finished .w-body{padding:12px 12px 0}
.finished p{text-align:center;padding-right:10px}
.o1{height:78px}
.o1 .path{height:22px;margin:6px 22px 6px 11px;border:1px solid #0078d7;background:#fff;padding:3px 2px;white-space:nowrap;overflow:hidden}
.path span{background:#0078d7;color:#fff}
.win .o2{margin-top:11px;height:233px}
.o2 .bar{height:14px;background:#06b025;margin:9px 23px 12px 24px;border:1px solid #bcbcbc}
.mix{display:flex;justify-content:flex-end;align-items:center;gap:6px;padding:9px 8px 0 0}
.meter{border-collapse:collapse;table-layout:fixed;width:606px;height:147px;background:linear-gradient(90deg,#00474d,#004f44 40%,#006036 504px,#006036 552px,#bd2400 552px);color:#fff;overflow:hidden}
.meter td{padding:0;height:9px;line-height:9px;text-align:right}
.meter td:nth-child(1){width:27px;opacity:.4}
.meter td:nth-child(n+2){width:53px}
.meter td:nth-child(2),.meter td:nth-child(3){opacity:.5}
.meter td:nth-child(4),.meter td:nth-child(5){opacity:.65}
.meter td:nth-child(6){opacity:.8}
.meter td:last-child{width:102px;padding-right:4px}
.when{margin-top:21px;height:23px}
.when span{width:99px}
.when .opt{width:157px}
.when button{margin-left:auto}
.acts{margin-top:7px;gap:6px}
.finished .row button{width:115px;height:24px}
.finished .row .mid{width:130px}
.acts span{flex:1}
.finished .row .default{border:2px solid #0078d7;margin-right:4px}
```
FILE: app.js
```js
const $ = id => document.getElementById(id);
const icon = (n, c = '') => `<svg class="${c}"><use href="#${n}"/></svg>`;

const quick = [['star','Quick access'],['netdrive','develop-farina-p',1],['folder','SOFA',1],['folder','SOFA_tindari_vari',1],['castle','SPARTA',1],['folder','VSTPlugins',1],['folder','VST3',1],['devdisk','Develop',1],['desktop','Desktop',1],['down','Downloads',1],['doc','Documents',1],['drive','Shared',1],['folder','plugin-02-custom',1],['picture','Pictures',1],['folder','Plugin',1],['netfolder','domenico',1],['folder','vscode-cpptools',1],['bin','Recycle Bin',1],['folder','createTESTsofa'],['folder','PAPER_PERF'],['folder','puredata_recorder'],['folder','Screenshots']];
const pc = [['pc','This PC'],['cube','3D Objects'],['desktop','Desktop'],['doc','Documents'],['netfolder','DomTower-Media'],['down','Downloads'],['netfolder','loc-CIMIL_NAS_dom'],['music','Music'],['picture','Pictures',0,1],['video','Videos'],['netfolder','vpn-CIMIL_NAS_dom']];
const tree = list => list.map(([i, t, p, on], k) =>
  `<li class="${k ? '' : 'root'}${on ? ' on' : ''}">${icon(i)}<span>${t}</span>${p ? icon('pin', 'pin') : ''}</li>`).join('');
$('tree-quick').innerHTML = tree(quick);
$('tree-pc').innerHTML = tree(pc);

const files = '16:15 654,16:12 653,16:08 647,16:05 647,16:03 618,16:00 632,15:56 653,15:53 652,15:45 609,15:41 608,15:37 609,15:26 652,15:22 654,15:19 649,15:15 647,15:13 647,15:11 646,15:10 663,15:08 663,15:07 663,15:05 662,15:04 663,15:03 663,15:01 663,15:00 663,14:59 663,14:57 661,14:56 660,14:55 659,14:54 666,14:53 663,14:52 663,14:51 657,14:50 663,14:50 647,14:46 618,14:45 618'.split(',');
$('file-rows').innerHTML = files.map((f, k) => {
  const [t, s] = f.split(' ');
  return `<tr class="${k === 24 ? 'on' : ''}"><td>${icon('irfan')}Screenshot (${82 - k}).png</td><td>16-Jan-25 ${t}</td><td>IrfanView PNG File</td><td>${s} KB</td><td></td></tr>`;
}).join('');

const apps = ['win','taskview','telegram','notion','cal','files','gmail','chrome','eight','blob','mailhome','orb','gear','vscode','reaper'];
const running = ['files','gear','vscode','reaper'];
document.querySelectorAll('[data-taskbar]').forEach(bar => {
  bar.insertAdjacentHTML('afterbegin', apps.map(a =>
    `<button class="${running.includes(a) ? 'run' : ''}${a === 'reaper' ? ' active' : ''}" aria-label="${a}">${icon(a)}${a === 'cal' ? '<b>31</b>' : ''}</button>`).join(''));
});

$('ruler').innerHTML = ['1.1.00 0:00.000','33.1.00 1:04.000','65.1.00 2:08.000','97.1.00 3:12.000','129.1.00 4:16.000','161.1.00 5:20.000','193.1.00 6:24.000','225.1.00 7:28.000']
  .map(s => { const [a, b] = s.split(' '); return `<div>${a}<small>${b}</small></div>`; }).join('');

$('sc-l').innerHTML = ['12','6','0-','6-','12-','18-','24-','30-','36-','42-'].join('<br>');
$('sc-m').innerHTML = [6,12,18,24,30,36,42,48,54].map(n => `-${n}-`).join('<br>');
$('sc-r').innerHTML = ['12','6','-0','-6','-12','-18','-24','-30','-36','-42'].join('<br>');

$('dials').innerHTML = ['Yaw','Pitch','Roll'].map((n, k) =>
  `<div><b>${n}</b>/ypr[${k}]<svg width="58" height="54" viewBox="0 0 58 54"><path d="M29 29L13 52A27.500 27.500 0 0 1 29 1z" fill="#b3b8b7"/><path d="M29 29L13 52A27.500 27.500 0 1 1 45 52z" fill="none" stroke="#c5cacb" stroke-width="1.500"/></svg><span>0.00</span><p>+/-<input type="checkbox" aria-label="Flip ${n}"></p></div>`).join('');

const peaks = ['15.2','15.6','15.0','14.9','15.1','15.1','15.4','15.1','14.9','15.3','15.7','15.6','14.8','14.7','15.0','15.1'];
$('meter').innerHTML = peaks.map(p =>
  '<tr>' + [60,54,48,42,36,30,24,18,12,6].map(v => `<td>-${v}</td>`).join('') + `<td>+${p}</td></tr>`).join('');
```
